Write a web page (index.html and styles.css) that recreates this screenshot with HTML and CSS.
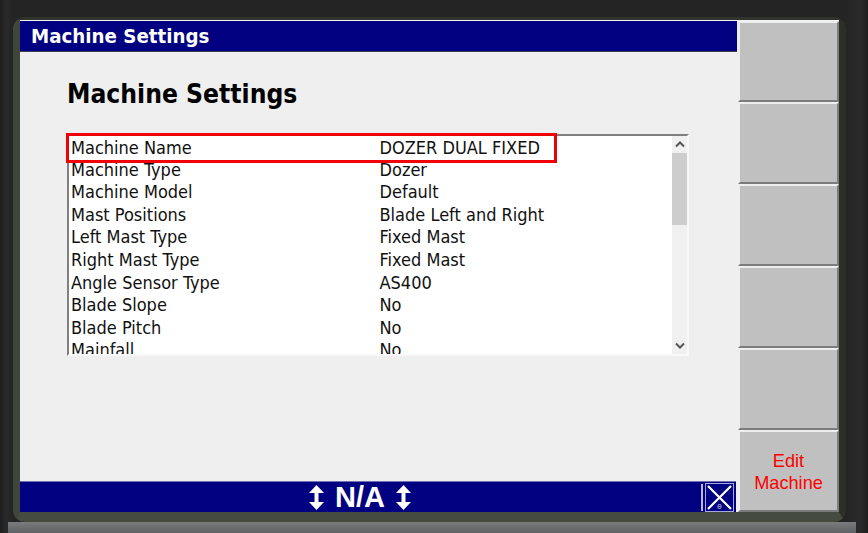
FILE: index.html
```html
<!DOCTYPE html>
<html lang="en">
<head>
<meta charset="utf-8">
<title>Machine Settings</title>
<link rel="stylesheet" href="styles.css">
</head>
<body>
<div class="bezel">
  <div class="screen">
    <main class="main">
      <header class="titlebar">Machine Settings</header>
      <section class="content">
        <h1 class="heading">Machine Settings</h1>
        <div class="listwrap">
          <div class="list">
            <div class="rows">
              <div class="row row-first"><span class="k">Machine Name</span><span>DOZER DUAL FIXED</span></div>
              <div class="row"><span class="k">Machine Type</span><span>Dozer</span></div>
              <div class="row"><span class="k">Machine Model</span><span>Default</span></div>
              <div class="row"><span class="k">Mast Positions</span><span>Blade Left and Right</span></div>
              <div class="row"><span class="k">Left Mast Type</span><span>Fixed Mast</span></div>
              <div class="row"><span class="k">Right Mast Type</span><span>Fixed Mast</span></div>
              <div class="row"><span class="k">Angle Sensor Type</span><span>AS400</span></div>
              <div class="row"><span class="k">Blade Slope</span><span>No</span></div>
              <div class="row"><span class="k">Blade Pitch</span><span>No</span></div>
              <div class="row"><span class="k">Mainfall</span><span>No</span></div>
            </div>
            <div class="scrollbar">
              <div class="sbtn"><svg width="10" height="7" viewBox="0 0 10 7"><path d="M1 5.5 5 1.5 9 5.5" fill="none" stroke="#555" stroke-width="2"/></svg></div>
              <div class="track"><div class="thumb"></div></div>
              <div class="sbtn"><svg width="10" height="7" viewBox="0 0 10 7"><path d="M1 1.5 5 5.5 9 1.5" fill="none" stroke="#555" stroke-width="2"/></svg></div>
            </div>
          </div>
          <div class="highlight"></div>
        </div>
      </section>
      <footer class="statusbar">
        <div class="status">
          <svg class="arrow" width="15" height="25" viewBox="0 0 15 25"><path d="M7.5 0 15 8H9.500V17H15L7.500 25 0 17H5.500V8H0Z" fill="#fff"/></svg>
          <span class="na">N/A</span>
          <svg class="arrow" width="15" height="25" viewBox="0 0 15 25"><path d="M7.5 0 15 8H9.500V17H15L7.500 25 0 17H5.500V8H0Z" fill="#fff"/></svg>
        </div>
        <div class="sep"></div>
        <div class="xbtn">
          <svg width="27" height="27" viewBox="0 0 27 27"><path d="M2 2 25 25M25 2 2 25" stroke="#fff" stroke-width="2.200"/></svg>
          <span class="xlabel">0</span>
        </div>
      </footer>
    </main>
    <aside class="softkeys">
      <div class="key key-first"></div>
      <div class="key"></div>
      <div class="key"></div>
      <div class="key"></div>
      <div class="key"></div>
      <div class="key key-action">Edit<br>Machine</div>
    </aside>
  </div>
</div>
</body>
</html>
```
FILE: styles.css
```css
* { box-sizing: border-box; }
html, body { margin: 0; height: 100%; }
body {
  width: 868px;
  height: 533px;
  overflow: hidden;
  padding: 17px 20px 0 13px;
  background:
    linear-gradient(#7a7c7e, #5e6061) 8px 522px / 848px 11px no-repeat,
    linear-gradient(90deg, #1e1e1e 0, #2a2a2a 6px, #242424 13px, #242424 845px, #2b2b2b 860px, #1d1d1d 868px),
    #242424;
  font-family: "DejaVu Sans", sans-serif;
}
.bezel {
  width: 833px;
  height: 505px;
  border-style: solid;
  border-width: 3px 7px 10px 7px;
  border-color: #30342c #2c2f29 #454c3f #40463b;
  border-radius: 12px;
}
.screen {
  display: flex;
  height: 492px;
  border-top: 1px solid #f4f4f4;
  background: #efefef;
}
.main {
  flex: 1;
  min-width: 0;
  display: flex;
  flex-direction: column;
}
.titlebar {
  height: 31px;
  margin-right: 1px;
  padding-left: 11px;
  background: #000080;
  border-bottom: 1px solid #3a3a50;
  color: #fff;
  font: bold 20.3px/30px "DejaVu Sans", sans-serif;
  font-stretch: condensed;
}
.content {
  flex: 1;
  padding: 24px 0 0 47px;
}
.heading {
  margin: 0 0 22px;
  color: #000;
  font: bold 26.2px/36px "DejaVu Sans", sans-serif;
  font-stretch: condensed;
}
.listwrap {
  position: relative;
  width: 622px;
}
.list {
  display: flex;
  height: 222px;
  overflow: hidden;
  background: #fff;
  border-top: 2px solid #808080;
  border-left: 2px solid #808080;
  border-right: 2px solid #f8f8f8;
  border-bottom: 2px solid #f8f8f8;
}
.rows {
  flex: 1;
  min-width: 0;
  overflow: hidden;
  color: #111;
}
.row {
  display: flex;
  height: 22.6px;
  padding-left: 2px;
  font: 18px/22px "DejaVu Sans", sans-serif;
  font-stretch: condensed;
  white-space: nowrap;
}
.row-first { line-height: 23px; }
.k { width: 308.5px; flex: none; }
.scrollbar {
  width: 15px;
  flex: none;
  display: flex;
  flex-direction: column;
  background: #f0f0f0;
}
.sbtn {
  height: 17px;
  flex: none;
  display: flex;
  align-items: center;
  justify-content: center;
}
.track { flex: 1; }
.thumb { height: 72px; background: #cdcdcd; }
.highlight {
  position: absolute;
  left: -1px;
  top: -1px;
  width: 491px;
  height: 30px;
  border: 3px solid #f00000;
}
.statusbar {
  height: 31px;
  flex: none;
  margin-right: 2px;
  display: flex;
  align-items: center;
  background: #000080;
  border-top: 1px solid #7070b0;
}
.status {
  width: 680px;
  display: flex;
  align-items: center;
  justify-content: center;
  gap: 11px;
}
.na {
  color: #fff;
  font: bold 29px/29px "Liberation Sans", sans-serif;
}
.sep {
  width: 2px;
  height: 27px;
  margin-left: 1px;
  background: #b8b8d8;
}
.xbtn {
  position: relative;
  width: 29px;
  height: 29px;
  margin-left: 2px;
  border: 1px solid #a8a8e0;
}
.xbtn svg { display: block; }
.xlabel {
  position: absolute;
  left: 11px;
  bottom: 0;
  color: #d0d0f0;
  font: 8px/9px "Liberation Mono", monospace;
}
.softkeys {
  width: 101px;
  flex: none;
  display: flex;
  flex-direction: column;
}
.key {
  height: 82px;
  flex: none;
  background: #c0c0c0;
  border-top: 2px solid #eeeeee;
  border-left: 2px solid #eeeeee;
  border-right: 2px solid #7c7c7c;
  border-bottom: 2px solid #7c7c7c;
}
.key-first { height: 81px; }
.key-action {
  flex: 1;
  display: flex;
  align-items: center;
  justify-content: center;
  text-align: center;
  padding-top: 1px;
  color: #ff0000;
  font: 18.2px/22px "Liberation Sans", sans-serif;
}
```
